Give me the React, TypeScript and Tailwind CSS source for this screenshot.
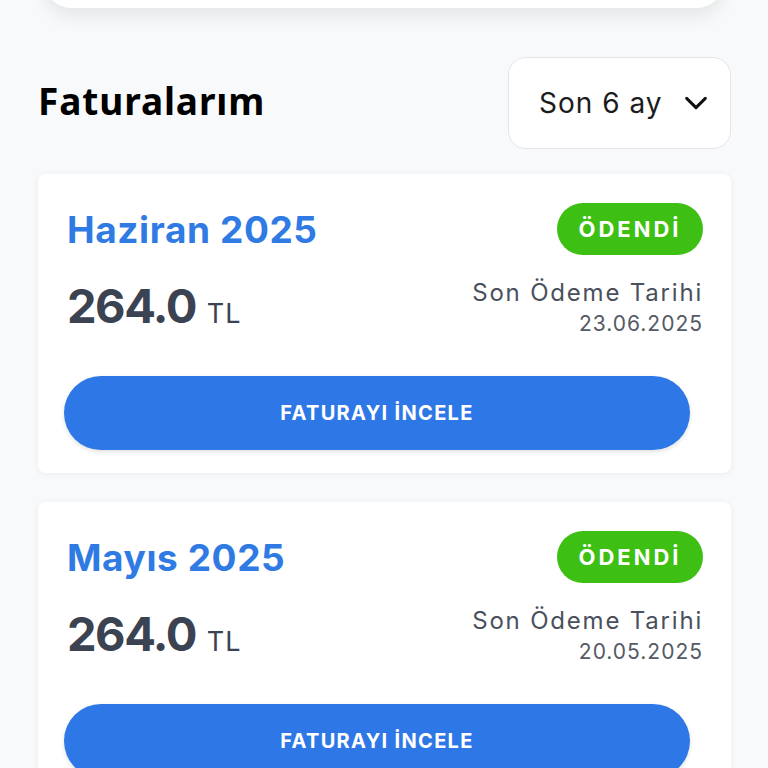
const bills = [
  { month: "Haziran 2025", amount: "264.0", due: "23.06.2025" },
  { month: "Mayıs 2025", amount: "264.0", due: "20.05.2025" },
];

function BillCard({ month, amount, due }: { month: string; amount: string; due: string }) {
  return (
    <div className="bg-white rounded-[8px] shadow-[0_1px_6px_rgba(0,0,0,0.06)] pt-[29px] pb-[23px] pl-[29px] pr-[28px]">
      <div className="flex items-center justify-between h-[52px]">
        <h3 className="text-[37px] font-bold text-[#2f7be3] leading-none tracking-[0.6px]">{month}</h3>
        <span className="h-[52px] w-[146px] rounded-full bg-[#3dbf14] text-white text-[22px] font-bold flex items-center justify-center tracking-[3px]">
          ÖDENDİ
        </span>
      </div>
      <div className="flex items-center justify-between mt-[23px]">
        <div className="flex items-baseline">
          <span className="text-[47px] font-bold text-[#3b4252] leading-none tracking-[-1.5px]">{amount}</span>
          <span className="text-[27px] text-[#3b4252] ml-[11px] tracking-[1px]">TL</span>
        </div>
        <div className="flex flex-col items-end">
          <span className="text-[24px] text-[#4a505c] leading-[30px] tracking-[1.8px]">Son Ödeme Tarihi</span>
          <span className="text-[21px] text-[#555a64] leading-[28px] mt-[2px] tracking-[1px]">{due}</span>
        </div>
      </div>
      <button className="mt-[38px] ml-[-3px] w-[626px] h-[74px] rounded-full bg-[#2e77e6] text-white text-[20px] font-bold tracking-[1.3px] shadow-[0_2px_4px_rgba(0,0,0,0.12)]">
        FATURAYI İNCELE
      </button>
    </div>
  );
}

export default function App() {
  return (
    <div className="w-[768px] h-[768px] overflow-hidden bg-[#f8f9fb] font-['Inter',sans-serif]">
      <div className="mx-[45px] -mt-[40px] h-[48px] bg-white rounded-b-[26px] shadow-[0_8px_18px_rgba(0,0,0,0.08)]" />
      <div className="px-[38px]">
        <div className="flex items-center justify-between mt-[49px]">
          <h2 className="text-[37px] font-bold text-black tracking-[0.9px] font-['Noto_Sans',sans-serif] -mt-[4px]">Faturalarım</h2>
          <div className="w-[223px] h-[92px] mr-[-1px] rounded-[18px] border border-[#e3e5ea] bg-white flex items-center pl-[30px] gap-[20px]">
            <span className="text-[28px] text-[#1c1c1c] tracking-[1px]">Son 6 ay</span>
            <svg width="28" height="28" viewBox="0 0 24 24" fill="none" stroke="#111" strokeWidth="2.6" strokeLinecap="round" strokeLinejoin="round">
              <path d="M4 8l8 8 8-8" />
            </svg>
          </div>
        </div>
        <div className="flex flex-col gap-[29px] mt-[25px] mr-[-1px]">
          {bills.map((b) => (
            <BillCard key={b.month} {...b} />
          ))}
        </div>
      </div>
    </div>
  );
}
